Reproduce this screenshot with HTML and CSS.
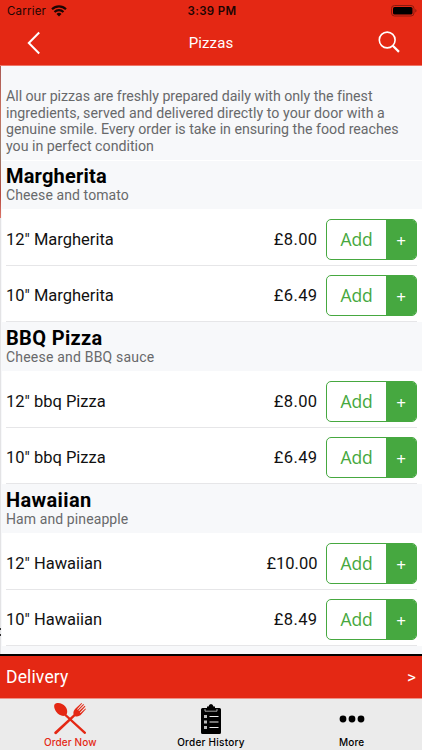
FILE: index.html
```
<!DOCTYPE html>
<html lang="en">
<head>
<meta charset="utf-8">
<title>Pizzas</title>
<link rel="stylesheet" href="styles.css">
</head>
<body>
<div class="app">
  <header class="top">
    <div class="status">
      <div class="carrier"><span>Carrier</span>
        <svg width="16" height="12" viewBox="0 0 16 12"><g fill="none" stroke="#1c0503" stroke-width="2.1"><path d="M1 4.2a10 10 0 0 1 14 0"/><path d="M3.5 7a6.4 6.4 0 0 1 9 0"/></g><path d="M5.5 8.9a3.6 3.6 0 0 1 5 0L8 11.5z" fill="#1c0503"/></svg>
      </div>
      <div class="time">3:39 PM</div>
      <svg class="battery" width="26" height="12" viewBox="0 0 26 12"><rect x=".5" y=".5" width="22.5" height="10.5" rx="3" fill="none" stroke="#8a1a0e"/><rect x="2" y="2" width="19.5" height="7.5" rx="1.6"/><path d="M24.3 4v3.6q1.2-.6 1.2-1.8T24.3 4" fill="#8a1a0e"/></svg>
    </div>
    <nav class="nav">
      <svg width="14" height="24" viewBox="0 0 14 24"><path d="M12.200 1.500 1.800 12l10.400 10.500" fill="none" stroke="#fff" stroke-width="2"/></svg>
      <h1>Pizzas</h1>
      <svg width="23" height="23" viewBox="0 0 23 23" fill="none" stroke="#fff"><circle cx="10.200" cy="9" r="7.900" stroke-width="1.600"/><path d="m15.800 14.700 6.200 6.200" stroke-width="2.200"/></svg>
    </nav>
  </header>
  <main class="menu">
    <p class="intro"><span class="l1">All our pizzas are freshly prepared daily with only the finest</span><br><span class="l2">ingredients, served and delivered directly to your door with a</span><br><span>genuine smile. Every order is take in ensuring the food reaches</span><br><span>you in perfect condition</span></p>
    <section>
      <div class="head"><h2>Margherita</h2><p class="tight">Cheese and tomato</p></div>
      <div class="row"><span class="item">12" Margherita</span><span class="price">£8.00</span><div class="add"><span>Add</span><b>+</b></div></div>
      <div class="row"><span class="item">10" Margherita</span><span class="price">£6.49</span><div class="add"><span>Add</span><b>+</b></div></div>
    </section>
    <section>
      <div class="head"><h2 class="wide">BBQ Pizza</h2><p>Cheese and BBQ sauce</p></div>
      <div class="row"><span class="item">12" bbq Pizza</span><span class="price">£8.00</span><div class="add"><span>Add</span><b>+</b></div></div>
      <div class="row"><span class="item">10" bbq Pizza</span><span class="price">£6.49</span><div class="add"><span>Add</span><b>+</b></div></div>
    </section>
    <section>
      <div class="head"><h2 class="wide">Hawaiian</h2><p class="tight">Ham and pineapple</p></div>
      <div class="row"><span class="item">12" Hawaiian</span><span class="price ten">£10.00</span><div class="add"><span>Add</span><b>+</b></div></div>
      <div class="row"><span class="item">10" Hawaiian</span><span class="price">£8.49</span><div class="add"><span>Add</span><b>+</b></div></div>
    </section>
  </main>
  <div class="delivery"><span>Delivery</span><span class="more">&gt;</span></div>
  <footer class="tabs">
    <div class="tab on">
      <svg width="34" height="33" viewBox="0 0 34 33" fill="#e42814"><path d="M1.500 2.500C4-.2 9.500 1 12.300 4.600c2.300 3 2.300 5.900 1.200 7.900L33 30.200q.3 1.700-1.600 1.900L11.600 13.800C8.500 14.300 5.300 13 3.200 9.800 1.300 7 .7 4.300 1.500 2.500z"/><path d="M1.200 30.300 20.500 12.500C20 9.500 21 8 22.500 6.500l6-5.500.6.500-5 5.700.6.500 5.600-5.600.7.600-5.500 5.900.6.500 5.700-5.300.6.700-5.500 5.900.6.500 4.900-4.500.6.600-4.700 5.200c-1.500 1.600-3.300 2.600-6.200 2L3.200 32.200q-2.100.3-2-1.900z"/></svg>
      <span>Order Now</span>
    </div>
    <div class="tab">
      <svg width="22" height="31" viewBox="0 0 22 31"><path d="M2.500 4H7V2.500h1.500Q9 0 11 0t2.500 2.500H15V4h4.500Q21 4 21 5.500v23q0 1.500-1.500 1.500h-17Q1 30 1 28.500v-23Q1 4 2.500 4z"/><path d="M5 5v2.200h12V5" fill="none" stroke="#ebebeb" stroke-width=".7"/><path d="M4 11h3v3H4zM4 16.500h3v3H4zM4 22h3v3H4z" fill="#bbb"/><path d="M9.500 12.500h9M9.500 18h9M9.500 23.500h9" stroke="#ebebeb" stroke-width="1.100"/></svg>
      <span class="history">Order History</span>
    </div>
    <div class="tab">
      <svg width="26" height="8" viewBox="0 0 26 8"><circle cx="4" cy="4" r="3.400"/><circle cx="13" cy="4" r="3.400"/><circle cx="22" cy="4" r="3.400"/></svg>
      <span>More</span>
    </div>
  </footer>
  <div class="photo-edge"></div>
  <div class="edge-mark"></div>
</div>
</body>
</html>
```
FILE: styles.css
```
* { box-sizing: border-box; }
body { margin: 0; font-family: Roboto, "Liberation Sans", sans-serif; }
h1, h2, p { margin: 0; }
svg { display: block; flex: none; }
.app { position: relative; width: 422px; height: 750px; overflow: hidden; display: flex; flex-direction: column; background: #f7f8fa; }
.top { height: 66px; background: #e42814; border-bottom: 1px solid #ee7668; }
.status { height: 22px; padding: 0 5px 0 7px; display: grid; grid-template-columns: 1fr auto 1fr; align-items: center; font: 11.5px Inter, sans-serif; color: #1c0503; }
.carrier { display: flex; align-items: center; gap: 5px; letter-spacing: .2px; }
.carrier svg { margin-top: -1px; }
.time { font-weight: 600; letter-spacing: .35px; }
.battery { justify-self: end; }
.nav { height: 43px; padding: 0 22px 2px 27px; display: grid; grid-template-columns: 1fr auto 1fr; align-items: center; }
.nav svg:last-child { justify-self: end; }
.nav h1 { font-size: 15px; font-weight: 400; color: #fff; letter-spacing: .1px; margin-right: 5px; }
.menu { height: 588px; padding-left: 1px; border-left: 1px solid #e3e3e5; }
.intro { height: 95px; padding: 22px 0 0 4px; border-bottom: 1px solid #fff; font-size: 14.2px; line-height: 16.7px; color: #68696b; white-space: nowrap; }
.l1 { letter-spacing: -.035px; }
.l2 { letter-spacing: .04px; }
.head { height: 48px; padding: 4px 0 0 4px; }
.head h2 { font-size: 20px; line-height: 23px; font-weight: 700; letter-spacing: .2px; }
.head .wide { letter-spacing: .35px; }
.head p { font-size: 14px; line-height: 15px; color: #68696b; letter-spacing: .2px; }
.head .tight { letter-spacing: .1px; }
.row { height: 57px; display: flex; align-items: center; padding: 3px 5px 0 4px; background: linear-gradient(#e6e6e8, #e6e6e8) 4px 100% / 411px 1px no-repeat #fff; }
.row:last-child { height: 56px; margin-bottom: 1px; }
.item { flex: 1; font-size: 16.5px; color: #111; }
.price { font-size: 16.5px; margin-right: 8.5px; color: #111; letter-spacing: .4px; }
.row:last-child .item, .row:last-child .price { padding-bottom: 1px; }
.price.ten { letter-spacing: 0; }
.add { width: 91px; height: 41px; display: flex; border: 1px solid #46a840; border-radius: 5px; overflow: hidden; color: #46a840; }
.add span { flex: 1; font: 17.5px/39px "Open Sans", sans-serif; letter-spacing: -.2px; text-align: center; }
.add b { width: 30px; background: #46a840; color: #fff; font: 17px/41px "Noto Sans", sans-serif; text-align: center; }
.delivery { height: 45px; border-top: 2px solid #000; border-bottom: 1px solid #ee9288; background: #e42814; color: #fff; padding: 0 6px; display: flex; justify-content: space-between; align-items: center; font-size: 17.5px; letter-spacing: .15px; }
.more { font-size: 17px; }
.tabs { height: 51px; display: flex; background: #ebebeb; padding-bottom: 2px; }
.tab { flex: 1; display: grid; grid-template-rows: 36px 13px; justify-items: center; align-items: center; font: 500 10px/13px Inter, sans-serif; letter-spacing: .1px; }
.tab svg { margin-top: 4px; }
.tab.on svg { margin-top: 3px; }
.tab > span { padding-top: 1px; }
.history { letter-spacing: .25px; }
.on { color: #e42814; }
.photo-edge { position: absolute; left: 0; top: 66px; width: 1px; height: 152px; background: linear-gradient(#a75a55, #c9705f 30%, #9b8170 55%, #b5473d 85%, #db7568); }
.edge-mark { position: absolute; left: 0; top: 628px; width: 1px; height: 8px; border: solid #333; border-width: 2px 0; }
```
